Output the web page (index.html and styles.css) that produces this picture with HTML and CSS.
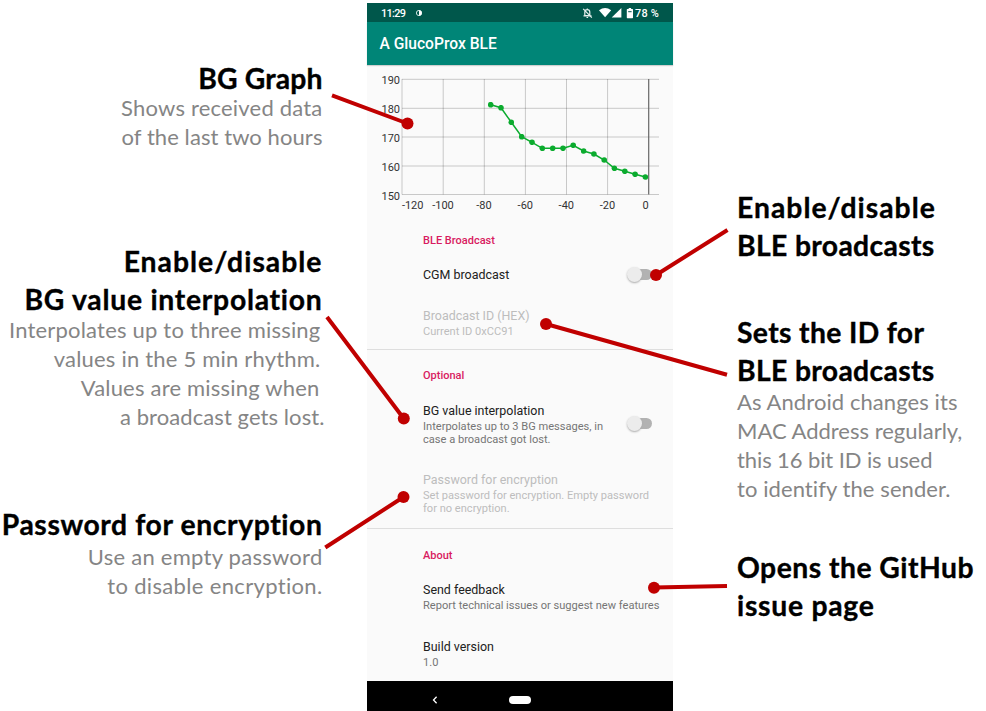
FILE: index.html
```
<!DOCTYPE html>
<html lang="en">
<head>
<meta charset="utf-8">
<title>A GlucoProx BLE</title>
<link rel="stylesheet" href="styles.css">
</head>
<body>
<main class="board">
  <div class="notes notes-left">
    <section class="note graph">
      <h2><span class="h0">BG Graph</span></h2>
      <p><span class="t2">Shows received data</span><span class="t1">of the last two hours</span></p>
    </section>
    <section class="note interpolation">
      <h2><span class="h5">Enable/disable</span><span class="h4">BG value interpolation</span></h2>
      <p><span class="t2 in1">Interpolates up to three missing</span><span class="t2 in1">values in the 5 min rhythm.</span><span class="t2 in2">Values are missing when</span><span class="t1 out">a broadcast gets lost.</span></p>
    </section>
    <section class="note password">
      <h2><span class="h3">Password for encryption</span></h2>
      <p><span class="t3">Use an empty password</span><span class="t4">to disable encryption.</span></p>
    </section>
  </div>

  <div class="phone">
    <div class="status">
      <span class="time">11:29</span>
      <svg class="dot" viewBox="0 0 8 8"><circle cx="4" cy="4" r="2.6" fill="none" stroke="#cfe3df"/><path d="M4 1.2a2.8 2.8 0 0 1 0 5.6z" fill="#fff"/></svg>
      <svg class="tray" viewBox="0 0 52 12">
        <g fill="none" stroke="#e6f0ee" stroke-width="1.2"><path d="M2.8 8.6V5.2a2.5 2.5 0 0 1 5 0v3.4zM1.5 8.8h8M5.3 2.6V1.4M4.5 10.5h1.6M1.2 1.8l8.6 8.8"/></g>
        <path d="M17 3.2q6.1-4.4 12.2 0l-6.1 7z" fill="#fff"/>
        <path d="M39.4 1v9.5H29.7z" fill="#fff"/>
        <path d="M45.4 2h1.3V.9h2.4V2h1.3q.6 0 .6.6v8q0 .6-.6.6h-5q-.6 0-.6-.6v-8q0-.6.6-.6z" fill="#fff"/>
        <path d="M46.2 4.2h3.4v1h-3.4z" fill="#00574b"/>
      </svg>
      <span class="battery">78 %</span>
    </div>
    <header class="appbar">A GlucoProx BLE</header>
    <div class="chart">
      <svg width="306" height="151" viewBox="367 65 306 151">
        <defs><marker id="point" markerUnits="userSpaceOnUse" markerWidth="6" markerHeight="6" refX="3" refY="3"><circle cx="3" cy="3" r="2.8" fill="#0bab2e"/></marker></defs>
        <g class="grid">
          <path d="M402 79.3h257M402 108.3h257M402 137h257M402 166h257M402 194.5h257"/>
          <path d="M402 79v115.5M443.2 79v115.5M484.3 79v115.5M525.4 79v115.5M566.5 79v115.5M607.6 79v115.5"/>
        </g>
        <path class="zero" d="M648.7 79v115.5"/>
        <g class="ylabels">
          <text x="400" y="84.3">190</text><text x="400" y="113.3">180</text><text x="400" y="142.2">170</text><text x="400" y="171.2">160</text><text x="400" y="200">150</text>
        </g>
        <g class="xlabels">
          <text x="412.7" y="209.4">-120</text><text x="443" y="209.4">-100</text><text x="484" y="209.4">-80</text><text x="525.3" y="209.4">-60</text><text x="566.3" y="209.4">-40</text><text x="607.5" y="209.4">-20</text><text x="645.7" y="209.4">0</text>
        </g>
        <polyline class="series" points="490.7,104.7 501,107.7 511.3,122.3 521.7,136.7 532,142.3 542.3,148.3 552.7,148.3 563,148.3 573.2,145.3 583.6,151 593.9,154 604.2,160 614.4,168.3 624.8,171.3 635.1,174.3 645.4,177"/>
      </svg>
    </div>
    <section class="group broadcast">
      <h3>BLE Broadcast</h3>
      <div class="row"><div><b>CGM broadcast</b></div><i class="switch"></i></div>
      <div class="row off"><div><b>Broadcast ID (HEX)</b><p>Current ID 0xCC91</p></div></div>
    </section>
    <section class="group optional">
      <h3>Optional</h3>
      <div class="row"><div><b>BG value interpolation</b><p>Interpolates up to 3 BG messages, in<br>case a broadcast got lost.</p></div><i class="switch"></i></div>
      <div class="row off"><div><b>Password for encryption</b><p>Set password for encryption. Empty password<br>for no encryption.</p></div></div>
    </section>
    <section class="group about">
      <h3>About</h3>
      <div class="row"><div><b>Send feedback</b><p>Report technical issues or suggest new features</p></div></div>
      <div class="row"><div><b>Build version</b><p>1.0</p></div></div>
    </section>
    <nav class="navbar">
      <svg viewBox="0 0 8 10"><path d="M5.6 1.8 2.5 5l3.1 3.2" fill="none" stroke="#fff" stroke-width="1.3"/></svg>
      <i class="pill"></i>
    </nav>
  </div>

  <div class="notes notes-right">
    <section class="note toggle">
      <h2><span class="h5">Enable/disable</span><span class="h1">BLE broadcasts</span></h2>
    </section>
    <section class="note ident">
      <h2><span class="h1">Sets the ID for</span><span class="h1">BLE broadcasts</span></h2>
      <p><span class="t1">As Android changes its</span><span class="t0">MAC Address regularly,</span><span class="tn">this 16 bit ID is used</span><span class="t1">to identify the sender.</span></p>
    </section>
    <section class="note issues">
      <h2><span class="h2">Opens the GitHub</span><span class="h4">issue page</span></h2>
    </section>
  </div>

  <svg class="pointers" width="986" height="711" viewBox="0 0 986 711">
    <path d="M332 95.3 407.5 123.5M327 317 403.7 418.5M325.3 547.5 403.5 497M727.5 230 656 275M727 374.8 546 324M727 586 654 587.6"/>
    <circle cx="407.5" cy="123.5" r="6"/><circle cx="403.8" cy="418.6" r="6"/><circle cx="403.5" cy="497" r="6"/>
    <circle cx="656" cy="275" r="6"/><circle cx="546" cy="324" r="6"/><circle cx="654" cy="587.7" r="6"/>
  </svg>
</main>
</body>
</html>
```
FILE: styles.css
```
* { box-sizing: border-box; }
body { margin: 0; background: #fff; font-family: Roboto, "Liberation Sans", sans-serif; }
h2, h3, p { margin: 0; }

.board {
  position: relative;
  display: grid;
  grid-template-columns: 367px 306px 313px;
  width: 986px;
  height: 711px;
  overflow: hidden;
}

/* Side notes */
.notes { display: flex; flex-direction: column; font-family: Lato, "Open Sans", sans-serif; white-space: nowrap; }
.notes-left { padding: 59px 44.5px 0 0; text-align: right; align-items: flex-end; }
.notes-right { padding: 188px 0 0 70px; margin-left: -6px; }
.note h2 { font-size: 28.3px; line-height: 38px; font-weight: 700; color: #000; -webkit-text-stroke: .35px #000; }
.note p { font-size: 22px; line-height: 29px; color: #858585; }
.note span { display: block; }
.graph { height: 183px; }
.graph p { margin-top: -4px; }
.interpolation { height: 263px; }
.interpolation p { margin-top: -3px; }
.password p { margin-top: -1px; }
.toggle { height: 125px; }
.ident { height: 235px; }
.ident p { margin-top: -2px; }

/* Tracking steps */
.h0 { letter-spacing: .15px; }
.h1 { letter-spacing: .35px; }
.h2 { letter-spacing: .48px; }
.h3 { letter-spacing: .6px; }
.h4 { letter-spacing: .74px; }
.h5 { letter-spacing: 1.02px; }
.tn { letter-spacing: -.1px; }
.t0 { letter-spacing: 0; }
.t1 { letter-spacing: .08px; }
.t2 { letter-spacing: .2px; }
.t3 { letter-spacing: .26px; }
.t4 { letter-spacing: .34px; }
.in1 { margin-right: 2px; }
.in2 { margin-right: 3px; }
.out { margin-right: -2px; }

/* Phone */
.phone { display: flex; flex-direction: column; margin-top: 3px; height: 708px; background: #fafafa; }
.status { display: flex; align-items: center; height: 19px; padding: 1px 14px 0; background: #00574b; color: #fff; font-size: 10.9px; font-weight: 500; }
.time { width: 34px; letter-spacing: -.7px; }
.dot { width: 8px; height: 8px; }
.tray { width: 52px; height: 12px; margin-left: auto; }
.battery { margin-left: 1px; white-space: nowrap; letter-spacing: .2px; }
.appbar { height: 43px; padding-left: 12.5px; background: #008577; color: #fff; font-size: 15.6px; font-weight: 500; line-height: 45px; box-shadow: 0 1px 1px #d0d0d0; }
.chart { height: 151px; }
.chart svg { display: block; }
.grid { fill: none; stroke: #000; stroke-opacity: .2; }
.zero { stroke: #666; stroke-width: 1.2; }
.chart text { font-size: 11px; fill: #333; }
.ylabels { text-anchor: end; }
.xlabels { text-anchor: middle; }
.series { fill: none; stroke: #0bab2e; stroke-width: 1.5; marker: url(#point); }

.group { padding-left: 56px; white-space: nowrap; }
.group h3 { font-size: 11px; line-height: 13px; font-weight: 500; color: #d81b60; }
.row { display: flex; align-items: center; justify-content: space-between; padding-right: 21px; }
.row b { display: block; font-size: 12.45px; line-height: 16px; font-weight: 400; color: #212121; }
.row p { margin-top: 1px; font-size: 11.08px; line-height: 13px; color: #757575; }
.off b, .off p { color: #bdbdbd; }
.broadcast { height: 134px; padding-top: 18px; border-bottom: 1px solid #dedede; }
.broadcast .row { margin-top: 20px; height: 16px; }
.broadcast .off { margin-top: 25px; height: 30px; }
.optional { height: 179px; padding-top: 19px; border-bottom: 1px solid #dedede; }
.optional .row { margin-top: 21px; }
.optional .off { margin-top: 26px; }
.about { height: 152px; padding-top: 20px; }
.about .row { margin-top: 20px; }
.about .row + .row { margin-top: 27px; }

.switch { display: flex; align-items: center; width: 25px; height: 11px; margin-bottom: 2px; border-radius: 6px; background: linear-gradient(90deg, transparent 6px, #b2b2b2 6px); }
.switch::before { content: ""; width: 15px; height: 15px; flex: none; border-radius: 50%; background: #ececec; box-shadow: 0 1px 2px #aaa; }

.navbar { display: flex; align-items: center; height: 30px; margin-top: auto; padding: 7px 0 0 64px; background: #000; }
.navbar svg { width: 8px; height: 10px; }
.pill { width: 22px; height: 8px; margin-left: 70px; border-radius: 4px; background: #fff; }

/* Callout lines over the screen */
.pointers { position: absolute; inset: 0; pointer-events: none; fill: #c00000; }
.pointers path { fill: none; stroke: #c00000; stroke-width: 4; }
```
